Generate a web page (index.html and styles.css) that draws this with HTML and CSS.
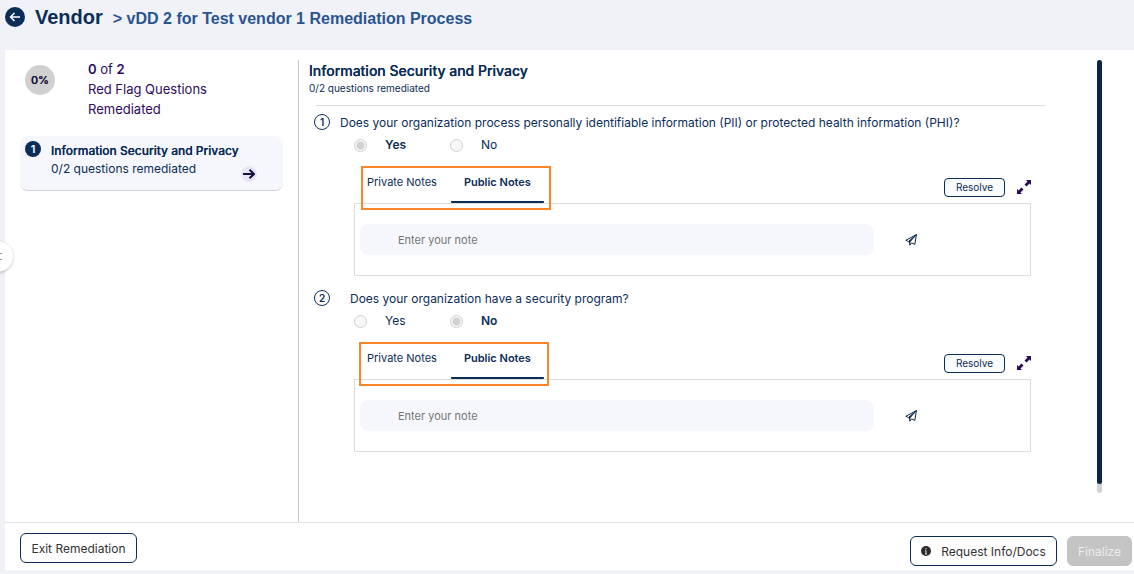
FILE: index.html
```
<!DOCTYPE html>
<html lang="en">
<head>
  <meta charset="UTF-8">
  <meta name="viewport" content="width=device-width, initial-scale=1.0">
  <title>Vendor Remediation</title>
  <link rel="stylesheet" href="styles.css">
</head>
<body>
  <header class="page-header">
    <a href="#" class="back" aria-label="Back">
      <svg width="20" height="20" viewBox="0 0 20 20">
        <circle cx="10" cy="10" r="10" fill="#0b2d57"/>
        <path d="M15 10H6M9.500 6L5.500 10l4 4" fill="none" stroke="#fff" stroke-width="1.500"/>
      </svg>
    </a>
    <h1>Vendor</h1>
    <span class="crumb">&gt; vDD 2 for Test vendor 1 Remediation Process</span>
  </header>

  <button type="button" class="drawer-toggle" aria-label="Open menu">
    <svg width="3" height="9" viewBox="0 0 3 9"><path d="M0 1.500h3M0 7.500h3" stroke="#999" stroke-width="1"/></svg>
  </button>

  <div class="card">
    <div class="workspace">
      <aside class="sidebar">
        <div class="progress">
          <div class="percent">0%</div>
          <p><b>0</b> of <b>2</b><br>Red Flag Questions Remediated</p>
        </div>
        <a href="#" class="section-link">
          <span class="badge">1</span>
          <span class="section-text">
            <strong>Information Security and Privacy</strong>
            <span>0/2 questions remediated</span>
          </span>
          <span class="go">
            <svg width="12" height="10" viewBox="0 0 12 10"><path d="M0 5h11M6.500 0.800L11 5l-4.500 4.200" fill="none" stroke="#14103c" stroke-width="2"/></svg>
          </span>
        </a>
      </aside>

      <main class="content">
        <div class="questions">
          <h2>Information Security and Privacy</h2>
          <p class="sub">0/2 questions remediated</p>
          <hr>

          <section class="question">
            <span class="number">1</span>
            <p class="question-text">Does your organization process personally identifiable information (PII) or protected health information (PHI)?</p>
            <div class="answers">
              <label class="checked"><input type="radio" name="q1" checked disabled>Yes</label>
              <label><input type="radio" name="q1" disabled>No</label>
            </div>
            <div class="notes">
              <div class="notes-bar">
                <div class="tabs">
                  <button type="button" class="tab">Private Notes</button>
                  <button type="button" class="tab active">Public Notes</button>
                  <span class="highlight"></span>
                </div>
                <button type="button" class="resolve">Resolve</button>
                <button type="button" class="icon-btn" aria-label="Expand">
                  <svg width="14" height="14" viewBox="0 0 14 14"><path d="M9 0h5v5l-1.500-1.500-3 3-2-2 3-3zM5 14H0V9l1.500 1.500 3-3 2 2-3 3z" fill="#2a0a57"/></svg>
                </button>
              </div>
              <div class="notes-box">
                <input type="text" placeholder="Enter your note" aria-label="Note for question 1">
                <button type="button" class="icon-btn" aria-label="Send">
                  <svg width="12" height="12" viewBox="0 0 12 12"><path d="M11.400 0.600L0.800 6.300l2.700 1.200L11.400 0.600 4.800 8v3.200l1.700-2.300 3.300 1.500z" fill="none" stroke="#0b2545" stroke-width="1" stroke-linejoin="round"/><path d="M3.500 7.500L9 3 4.800 8v3.200z" fill="#0b2545"/></svg>
                </button>
              </div>
            </div>
          </section>

          <section class="question indented">
            <span class="number">2</span>
            <p class="question-text">Does your organization have a security program?</p>
            <div class="answers">
              <label><input type="radio" name="q2" disabled>Yes</label>
              <label class="checked"><input type="radio" name="q2" checked disabled>No</label>
            </div>
            <div class="notes">
              <div class="notes-bar">
                <div class="tabs">
                  <button type="button" class="tab">Private Notes</button>
                  <button type="button" class="tab active">Public Notes</button>
                  <span class="highlight"></span>
                </div>
                <button type="button" class="resolve">Resolve</button>
                <button type="button" class="icon-btn" aria-label="Expand">
                  <svg width="14" height="14" viewBox="0 0 14 14"><path d="M9 0h5v5l-1.500-1.500-3 3-2-2 3-3zM5 14H0V9l1.500 1.500 3-3 2 2-3 3z" fill="#2a0a57"/></svg>
                </button>
              </div>
              <div class="notes-box">
                <input type="text" placeholder="Enter your note" aria-label="Note for question 2">
                <button type="button" class="icon-btn" aria-label="Send">
                  <svg width="12" height="12" viewBox="0 0 12 12"><path d="M11.400 0.600L0.800 6.300l2.700 1.200L11.400 0.600 4.800 8v3.200l1.700-2.300 3.300 1.500z" fill="none" stroke="#0b2545" stroke-width="1" stroke-linejoin="round"/><path d="M3.500 7.500L9 3 4.800 8v3.200z" fill="#0b2545"/></svg>
                </button>
              </div>
            </div>
          </section>
        </div>
        <div class="scrollbar"><div class="thumb"></div></div>
      </main>
    </div>

    <footer class="actions">
      <button type="button" class="btn exit">Exit Remediation</button>
      <div class="actions-right">
        <button type="button" class="btn request">
          <svg width="10" height="10" viewBox="0 0 10 10"><circle cx="5" cy="5" r="5" fill="#2b2b2b"/><path d="M5 2v1.500M4 4.800h1V8M4 8h2" fill="none" stroke="#ddd" stroke-width="1"/></svg>
          Request Info/Docs
        </button>
        <button type="button" class="btn finalize" disabled>Finalize</button>
      </div>
    </footer>
  </div>
</body>
</html>
```

FILE: styles.css
```
* {
  box-sizing: border-box;
}
body {
  margin: 0;
  padding: 0 0 4px 5px;
  min-height: 100vh;
  display: flex;
  flex-direction: column;
  font-family: Inter, "Liberation Sans", sans-serif;
  font-size: 13px;
  line-height: 20px;
  color: #0b2d57;
  background-color: #f0f2f8;
}
h1, h2, p {
  margin: 0;
}
button, input {
  font-family: inherit;
  color: inherit;
}
svg {
  display: block;
}
.page-header {
  display: flex;
  align-items: center;
  height: 50px;
  padding-bottom: 17px;
  font-family: "Liberation Sans", Arial, sans-serif;
}
.back {
  margin-right: 10px;
}
.page-header h1 {
  font-size: 20px;
  margin-right: 10px;
}
.crumb {
  font-size: 16px;
  font-weight: bold;
  color: #2a5490;
  padding-top: 4px;
}
.drawer-toggle {
  position: absolute;
  left: -18px;
  top: 241px;
  width: 31px;
  height: 31px;
  padding: 0 0 0 17px;
  border: none;
  border-radius: 50%;
  background-color: #fff;
  box-shadow: 0 1px 3px rgba(0, 0, 0, 0.25);
}
.card {
  flex: 1;
  display: flex;
  flex-direction: column;
  background-color: #fff;
}
.workspace {
  flex: 1;
  display: flex;
  padding-top: 10px;
}
.sidebar {
  width: 294px;
  flex-shrink: 0;
  padding: 0 15px;
  border-right: 1px solid #c8c8c8;
}
.progress {
  display: flex;
  gap: 33px;
  padding: 0 5px;
  margin: -1px 0 17px;
  color: #2f0a60;
}
.progress p {
  width: 150px;
}
.progress b {
  font-weight: 600;
}
.percent {
  width: 30px;
  height: 30px;
  margin-top: 6px;
  border-radius: 50%;
  background-color: #d0d0d0;
  color: #14103c;
  font-size: 11px;
  font-weight: 500;
  line-height: 30px;
  text-align: center;
  text-shadow: 0 0 0 currentColor;
}
.section-link {
  display: flex;
  height: 55px;
  padding: 5px;
  border-radius: 8px;
  border-bottom: 1px solid #cfcfd6;
  background-color: #f6f7fc;
  color: inherit;
  text-decoration: none;
}
.badge {
  width: 16px;
  height: 16px;
  margin-right: 10px;
  border-radius: 50%;
  background-color: #0b2d57;
  color: #fff;
  font-size: 11px;
  font-weight: 600;
  line-height: 16px;
  text-align: center;
}
.section-text {
  flex: 1;
  display: flex;
  flex-direction: column;
  padding-top: 1px;
  font-size: 12px;
  line-height: 18px;
  white-space: nowrap;
}
.section-text strong {
  font-weight: 500;
  text-shadow: 0 0 0 currentColor;
}
.go {
  display: flex;
  align-items: center;
  justify-content: center;
  align-self: flex-end;
  width: 16px;
  height: 16px;
  margin: 0 21px 3px 0;
  border-radius: 50%;
  background-color: #e8e6f6;
}
.content {
  flex: 1;
  display: flex;
  justify-content: space-between;
  padding: 0 32px 29px 10px;
}
.questions {
  flex: 1;
  max-width: 736px;
}
.questions h2 {
  font-size: 14px;
  font-weight: 500;
  line-height: 22px;
  text-shadow: 0 0 0 currentColor;
}
.sub {
  font-size: 10px;
  line-height: 12px;
}
.questions hr {
  margin: 11px 0 8px 7px;
  border: none;
  border-top: 1px solid #ddd;
}
.question {
  position: relative;
  padding: 0 14px 14px 31px;
}
.number {
  position: absolute;
  left: 5px;
  top: 0;
  width: 16px;
  height: 16px;
  border: 1px solid #0b2d57;
  border-radius: 50%;
  font-size: 10px;
  font-weight: 600;
  line-height: 14px;
  text-align: center;
}
.question-text {
  font-size: 12px;
  line-height: 18px;
}
.indented .question-text {
  padding-left: 10px;
}
.answers {
  display: flex;
  padding: 3px 0 8px 14px;
  font-size: 12px;
}
.answers label {
  display: flex;
  align-items: center;
  width: 96px;
}
.answers input {
  width: 13px;
  height: 13px;
  margin: 0 18px 0 0;
}
.answers .checked {
  font-weight: 600;
}
.notes {
  margin-left: 14px;
}
.notes-bar {
  display: flex;
  align-items: center;
  height: 40px;
  padding-top: 8px;
}
.tabs {
  position: relative;
  display: flex;
  align-self: stretch;
  margin: -8px auto 0 0;
}
.tab {
  padding: 0 13px;
  border: none;
  border-bottom: 2px solid transparent;
  background: none;
  font-size: 11px;
  white-space: nowrap;
}
.tab.active {
  margin-left: 1px;
  border-bottom-color: #0b2d57;
  border-radius: 1px;
  font-weight: 600;
}
.highlight {
  position: absolute;
  left: 7px;
  top: 3px;
  width: 190px;
  height: 44px;
  border: 2px solid #fd862d;
  pointer-events: none;
}
.indented .highlight {
  left: 5px;
}
.resolve {
  width: 61px;
  height: 19px;
  margin-right: 12px;
  padding: 0;
  border: 1px solid #0b2d57;
  border-radius: 4px;
  background-color: #f9fafc;
  font-size: 10px;
}
.icon-btn {
  padding: 0;
  border: none;
  background: none;
}
.notes-box {
  display: flex;
  align-items: center;
  height: 73px;
  padding: 0 113px 0 5px;
  border: 1px solid #ddd;
}
.notes-box input {
  flex: 1;
  height: 31px;
  margin-right: 31px;
  padding: 0 38px;
  border: none;
  border-radius: 8px;
  background-color: #f6f7fc;
  font-size: 11px;
}
.notes-box input::placeholder {
  color: #757575;
}
.scrollbar {
  width: 5px;
  border-radius: 3px;
  background-color: #d3d3d3;
}
.thumb {
  height: 98%;
  border-radius: 3px;
  background-color: #0b2545;
}
.actions {
  display: flex;
  justify-content: space-between;
  height: 48px;
  padding: 10px 2px 0 15px;
  border-top: 1px solid #e2e2f6;
}
.actions-right {
  display: flex;
  gap: 10px;
  padding-top: 3px;
}
.btn {
  height: 30px;
  border: 1px solid #0b2d57;
  border-radius: 6px;
  background-color: #fff;
  color: #333;
  font-size: 12px;
}
.exit {
  width: 117px;
}
.request {
  display: flex;
  align-items: center;
  justify-content: center;
  gap: 10px;
  width: 147px;
}
.finalize {
  width: 65px;
  border-color: #c4c4c4;
  background-color: #c4c4c4;
  color: #eee;
}
```
